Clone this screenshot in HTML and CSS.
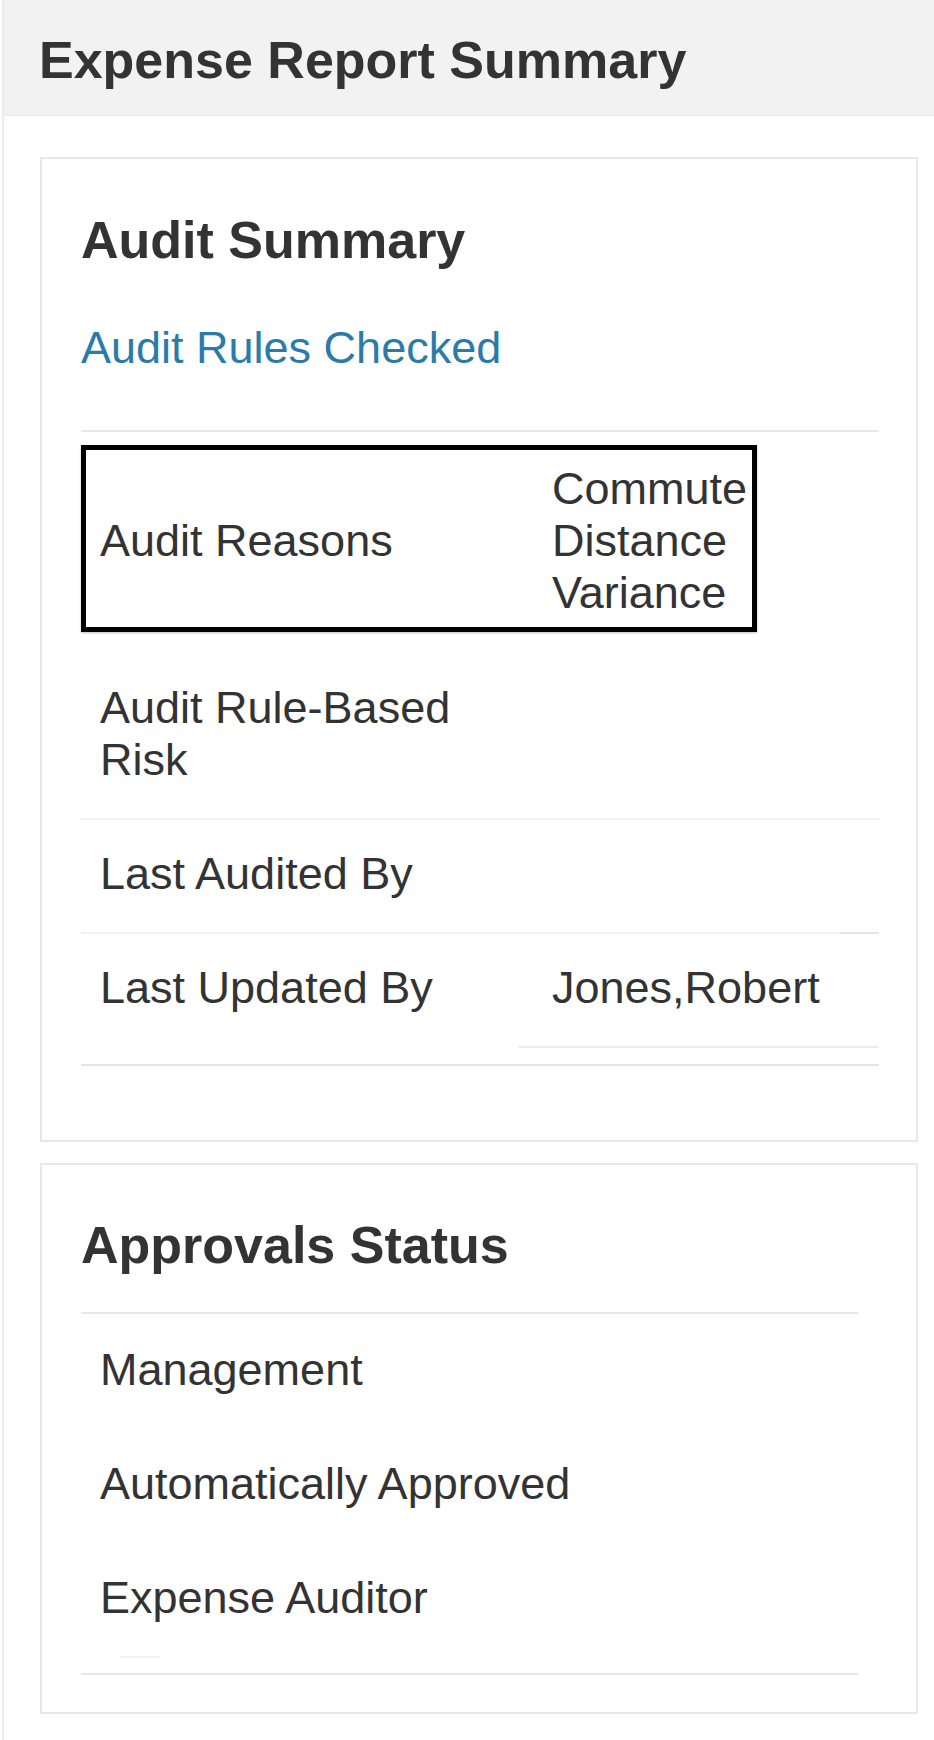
FILE: index.html
```html
<!DOCTYPE html>
<html lang="en">
<head>
<meta charset="utf-8">
<title>Expense Report Summary</title>
<link rel="stylesheet" href="styles.css">
</head>
<body>
<div class="page">
  <header class="page-header">
    <h1 class="page-title">Expense Report Summary</h1>
  </header>

  <section class="card card-audit">
    <h2 class="card-title">Audit Summary</h2>
    <a class="card-link" href="#">Audit Rules Checked</a>
    <div class="divider divider-top"></div>

    <div class="row row-highlight">
      <div class="row-label">Audit Reasons</div>
      <div class="row-value">Commute Distance Variance</div>
    </div>
    <div class="row row-faint">
      <div class="row-label">Audit Rule-Based Risk</div>
      <div class="row-value"></div>
    </div>
    <div class="row row-soft">
      <div class="row-label">Last Audited By</div>
      <div class="row-value"></div>
    </div>
    <div class="row row-plain">
      <div class="row-label">Last Updated By</div>
      <div class="row-value row-value-underline">Jones,Robert</div>
    </div>
    <div class="divider divider-bottom"></div>
  </section>

  <section class="card card-approvals">
    <h2 class="card-title">Approvals Status</h2>
    <div class="divider divider-approvals"></div>
    <div class="approval-row">Management</div>
    <div class="approval-row">Automatically Approved</div>
    <div class="approval-row">Expense Auditor</div>
    <div class="stub-line"></div>
    <div class="divider divider-approvals divider-end"></div>
  </section>
</div>
</body>
</html>
```

FILE: styles.css
```css
* {
  box-sizing: border-box;
}

html, body {
  margin: 0;
  padding: 0;
  background: #ffffff;
}

body {
  font-family: "Liberation Sans", Arial, Helvetica, sans-serif;
  color: #333333;
}

.page {
  margin-left: 2px;
  border-left: 2px solid #ececec;
  min-height: 1740px;
  padding-bottom: 1px;
}

.page-header {
  height: 116px;
  background: #f2f2f2;
  border-bottom: 1px solid #e8e8e8;
  padding: 30px 0 0 35px;
}

.page-title {
  margin: 0;
  font-size: 52px;
  line-height: 60px;
  font-weight: bold;
  color: #333333;
}

.card {
  margin: 41px 16px 0 36px;
  border: 2px solid #e8e8e8;
  background: #ffffff;
}

.card-audit {
  padding: 51px 37px 74px 39px;
}

.card-approvals {
  margin-top: 21px;
  padding: 50px 58px 37px 39px;
}

.card-title {
  margin: 0;
  font-size: 52px;
  line-height: 60px;
  font-weight: bold;
  color: #333333;
}

.card-link {
  display: block;
  margin-top: 52px;
  font-size: 45px;
  line-height: 52px;
  color: #2a7ba8;
  text-decoration: none;
}

.divider {
  height: 2px;
  background: #e8e8e8;
}

.divider-top {
  margin-top: 56px;
}

.divider-bottom {
  margin-top: 16px;
  background: #e4e4e4;
}

.row {
  position: relative;
  display: grid;
  grid-template-columns: 419px 1fr;
  padding: 28px 0 32px 19px;
  font-size: 45px;
  line-height: 52px;
  color: #333333;
}

.row-value {
  padding-left: 33px;
}

.row-highlight {
  width: 676px;
  margin-top: 13px;
  margin-bottom: 22px;
  padding: 13px 0 8px 14px;
  border: 5px solid #000000;
  box-shadow: 0 1px 2px rgba(0, 0, 0, 0.25);
  align-items: center;
}

.row-faint {
  border-bottom: 2px solid #f4f4f4;
}

.row-soft {
  border-bottom: 2px solid #f1f1f1;
}

.row-soft::after {
  content: "";
  position: absolute;
  right: 0;
  bottom: -2px;
  width: 39px;
  height: 2px;
  background: #e6e6e6;
}

.row-plain {
  padding-bottom: 0;
}

.row-value-underline {
  padding-bottom: 32px;
  border-bottom: 2px solid #ececec;
}

.divider-approvals {
  margin-top: 37px;
  background: #e8e8e8;
}

.approval-row {
  padding: 30px 0 32px 19px;
  font-size: 45px;
  line-height: 52px;
  color: #333333;
}

.stub-line {
  width: 40px;
  height: 2px;
  margin-left: 39px;
  background: #f1f1f1;
}

.divider-end {
  margin-top: 15px;
}
```
